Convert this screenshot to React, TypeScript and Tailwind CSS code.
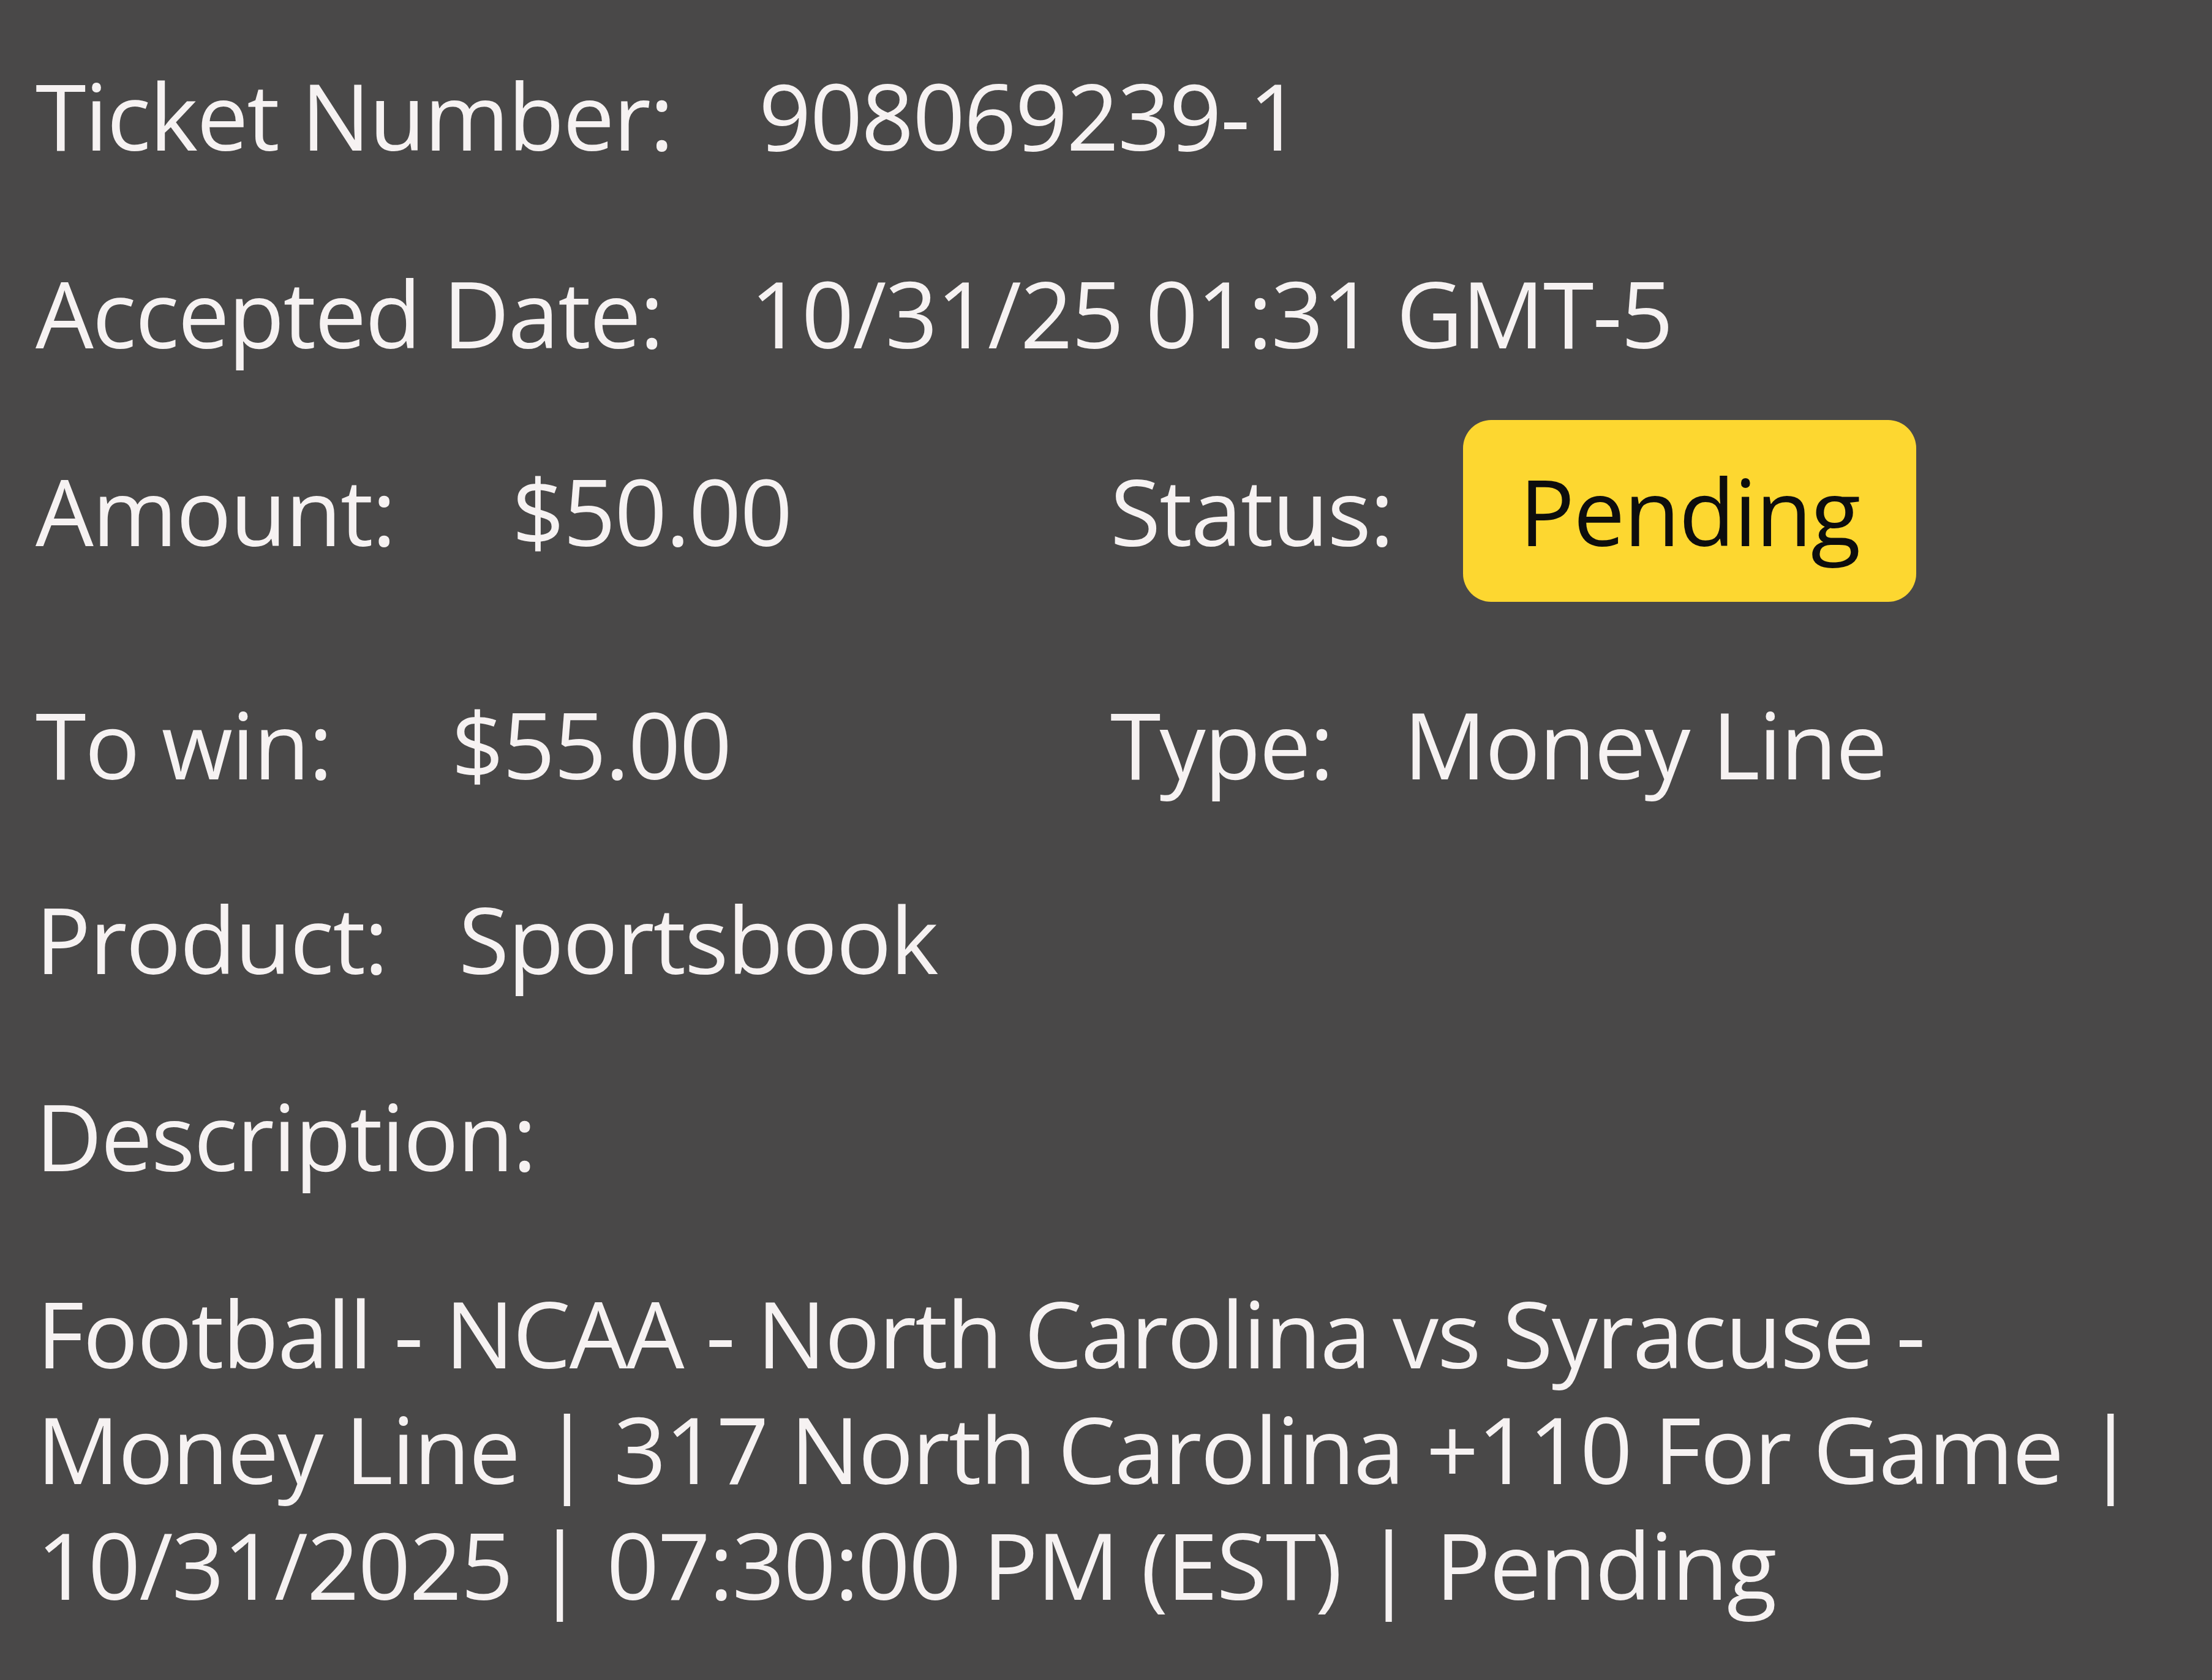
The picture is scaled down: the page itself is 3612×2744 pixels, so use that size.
const rows = {
  ticket: "908069239-1",
  accepted: "10/31/25 01:31 GMT-5",
  amount: "$50.00",
  toWin: "$55.00",
  type: "Money Line",
  product: "Sportsbook",
  description:
    "Football - NCAA - North Carolina vs Syracuse - Money Line | 317 North Carolina +110 For Game | 10/31/2025 | 07:30:00 PM (EST) | Pending",
};

const App = () => {
  return (
    <div
      className="min-h-[2744px] w-[3612px] bg-[#494848] text-[#f6f2f2] text-[150px] leading-[189px] tracking-[-2px] pl-[58px] pr-[60px] pt-[94px] overflow-hidden"
      style={{ fontFamily: '"Open Sans", "Noto Sans", sans-serif' }}
    >
      <div className="flex">
        <span className="w-[1181px]">Ticket Number:</span>
        <span>{rows.ticket}</span>
      </div>

      <div className="flex mt-[134px]">
        <span className="w-[1167px]">Accepted Date:</span>
        <span>{rows.accepted}</span>
      </div>

      <div className="flex items-center h-[297px] mt-[80px]">
        <div className="flex w-[1755px]">
          <span className="w-[778px]">Amount:</span>
          <span>{rows.amount}</span>
        </div>
        <div className="flex items-center">
          <span className="w-[576px]">Status:</span>
          <span className="h-[297px] flex items-center px-[92px] rounded-[46px] bg-[#fdd730] text-[#0d0d0d]">
            Pending
          </span>
        </div>
      </div>

      <div className="flex mt-[138px]">
        <div className="flex w-[1755px]">
          <span className="w-[679px]">To win:</span>
          <span>{rows.toWin}</span>
        </div>
        <div className="flex">
          <span className="w-[479px]">Type:</span>
          <span>{rows.type}</span>
        </div>
      </div>

      <div className="flex mt-[129px]">
        <span className="w-[691px]">Product:</span>
        <span>{rows.product}</span>
      </div>

      <div className="mt-[133px]">Description:</div>

      <p className="mt-[133px] pl-[2px]">{rows.description}</p>
    </div>
  );
};

export default App;
